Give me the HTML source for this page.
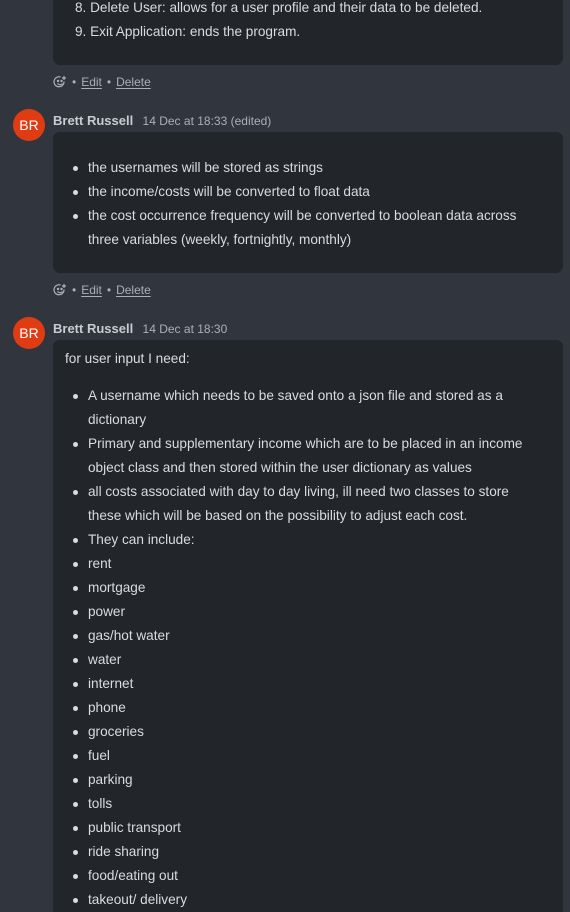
<!DOCTYPE html>
<html style="overflow:hidden;height:912px"><head><meta charset="utf-8"><style>
*{margin:0;padding:0;box-sizing:border-box}
body{width:570px;height:912px;overflow:hidden;background:#31353d;font-family:"Liberation Sans",sans-serif;color:#d9dbde;font-size:14px;position:relative}
.card{position:absolute;left:53px;width:510px;background:#22262b;border-radius:7px}
.l{position:absolute;white-space:nowrap;line-height:24px;font-size:13.6px}
.b{position:absolute;width:5px;height:5px;border-radius:50%;background:#d9dbde}
.av{position:absolute;left:13px;width:32px;height:32px;border-radius:50%;background:#e03c14;color:#fff;font-size:14px;text-align:center;line-height:32px}
.hd{position:absolute;left:53px;font-size:12px;color:#aab0b8;white-space:nowrap}
.hd b{color:#c8ccd2;font-size:13px;margin-right:6px}
.act{position:absolute;left:53px;font-size:12px;color:#aab0b8;white-space:nowrap;display:flex;align-items:center;gap:5px}
.act u{text-underline-offset:2px}
</style></head><body>
<div class="card" style="top:-20px;height:85px"></div>
<div class="l" style="left:75px;top:-4px">8. Delete User: allows for a user profile and their data to be deleted.</div>
<div class="l" style="left:75px;top:20px">9. Exit Application: ends the program.</div>

<div class="act" style="top:75px"><svg width="14" height="14" viewBox="0 0 14 14" fill="none" stroke="#aab0b8" stroke-width="1.2"><path d="M11 6.5A5 5 0 1 1 7.5 2"/><circle cx="5" cy="6" r=".6" fill="#aab0b8"/><circle cx="8.5" cy="6" r=".6" fill="#aab0b8"/><path d="M4.5 8.5q2.5 2.5 5 0M11 1v4M9 3h4"/></svg><span>•</span><u>Edit</u><span>•</span><u>Delete</u></div>

<div class="av" style="top:109px">BR</div>
<div class="hd" style="top:113px"><b>Brett Russell</b> 14 Dec at 18:33 (edited)</div>
<div class="card" style="top:132px;height:141px"></div>
<div class="b" style="left:73px;top:166px"></div><div class="l" style="left:88px;top:156px">the usernames will be stored as strings</div>
<div class="b" style="left:73px;top:190px"></div><div class="l" style="left:88px;top:180px">the income/costs will be converted to float data</div>
<div class="b" style="left:73px;top:214px"></div><div class="l" style="left:88px;top:204px">the cost occurrence frequency will be converted to boolean data across</div>
<div class="l" style="left:88px;top:228px">three variables (weekly, fortnightly, monthly)</div>

<div class="act" style="top:283px"><svg width="14" height="14" viewBox="0 0 14 14" fill="none" stroke="#aab0b8" stroke-width="1.2"><path d="M11 6.5A5 5 0 1 1 7.5 2"/><circle cx="5" cy="6" r=".6" fill="#aab0b8"/><circle cx="8.5" cy="6" r=".6" fill="#aab0b8"/><path d="M4.5 8.5q2.5 2.5 5 0M11 1v4M9 3h4"/></svg><span>•</span><u>Edit</u><span>•</span><u>Delete</u></div>

<div class="av" style="top:317px">BR</div>
<div class="hd" style="top:321px"><b>Brett Russell</b> 14 Dec at 18:30</div>
<div class="card" style="top:340px;height:600px"></div>
<div class="l" style="left:65px;top:347px">for user input I need:</div>
<div class="b" style="left:73px;top:394px"></div><div class="l" style="left:88px;top:384px">A username which needs to be saved onto a json file and stored as a</div>
<div class="l" style="left:88px;top:408px">dictionary</div>
<div class="b" style="left:73px;top:442px"></div><div class="l" style="left:88px;top:432px">Primary and supplementary income which are to be placed in an income</div>
<div class="l" style="left:88px;top:456px">object class and then stored within the user dictionary as values</div>
<div class="b" style="left:73px;top:490px"></div><div class="l" style="left:88px;top:480px">all costs associated with day to day living, ill need two classes to store</div>
<div class="l" style="left:88px;top:504px">these which will be based on the possibility to adjust each cost.</div>
<div class="b" style="left:73px;top:538px"></div><div class="l" style="left:88px;top:528px">They can include:</div>
<div class="b" style="left:73px;top:562px"></div><div class="l" style="left:88px;top:552px">rent</div>
<div class="b" style="left:73px;top:586px"></div><div class="l" style="left:88px;top:576px">mortgage</div>
<div class="b" style="left:73px;top:610px"></div><div class="l" style="left:88px;top:600px">power</div>
<div class="b" style="left:73px;top:634px"></div><div class="l" style="left:88px;top:624px">gas/hot water</div>
<div class="b" style="left:73px;top:658px"></div><div class="l" style="left:88px;top:648px">water</div>
<div class="b" style="left:73px;top:682px"></div><div class="l" style="left:88px;top:672px">internet</div>
<div class="b" style="left:73px;top:706px"></div><div class="l" style="left:88px;top:696px">phone</div>
<div class="b" style="left:73px;top:730px"></div><div class="l" style="left:88px;top:720px">groceries</div>
<div class="b" style="left:73px;top:754px"></div><div class="l" style="left:88px;top:744px">fuel</div>
<div class="b" style="left:73px;top:778px"></div><div class="l" style="left:88px;top:768px">parking</div>
<div class="b" style="left:73px;top:802px"></div><div class="l" style="left:88px;top:792px">tolls</div>
<div class="b" style="left:73px;top:826px"></div><div class="l" style="left:88px;top:816px">public transport</div>
<div class="b" style="left:73px;top:850px"></div><div class="l" style="left:88px;top:840px">ride sharing</div>
<div class="b" style="left:73px;top:874px"></div><div class="l" style="left:88px;top:864px">food/eating out</div>
<div class="b" style="left:73px;top:898px"></div><div class="l" style="left:88px;top:888px">takeout/ delivery</div>
</body></html>
